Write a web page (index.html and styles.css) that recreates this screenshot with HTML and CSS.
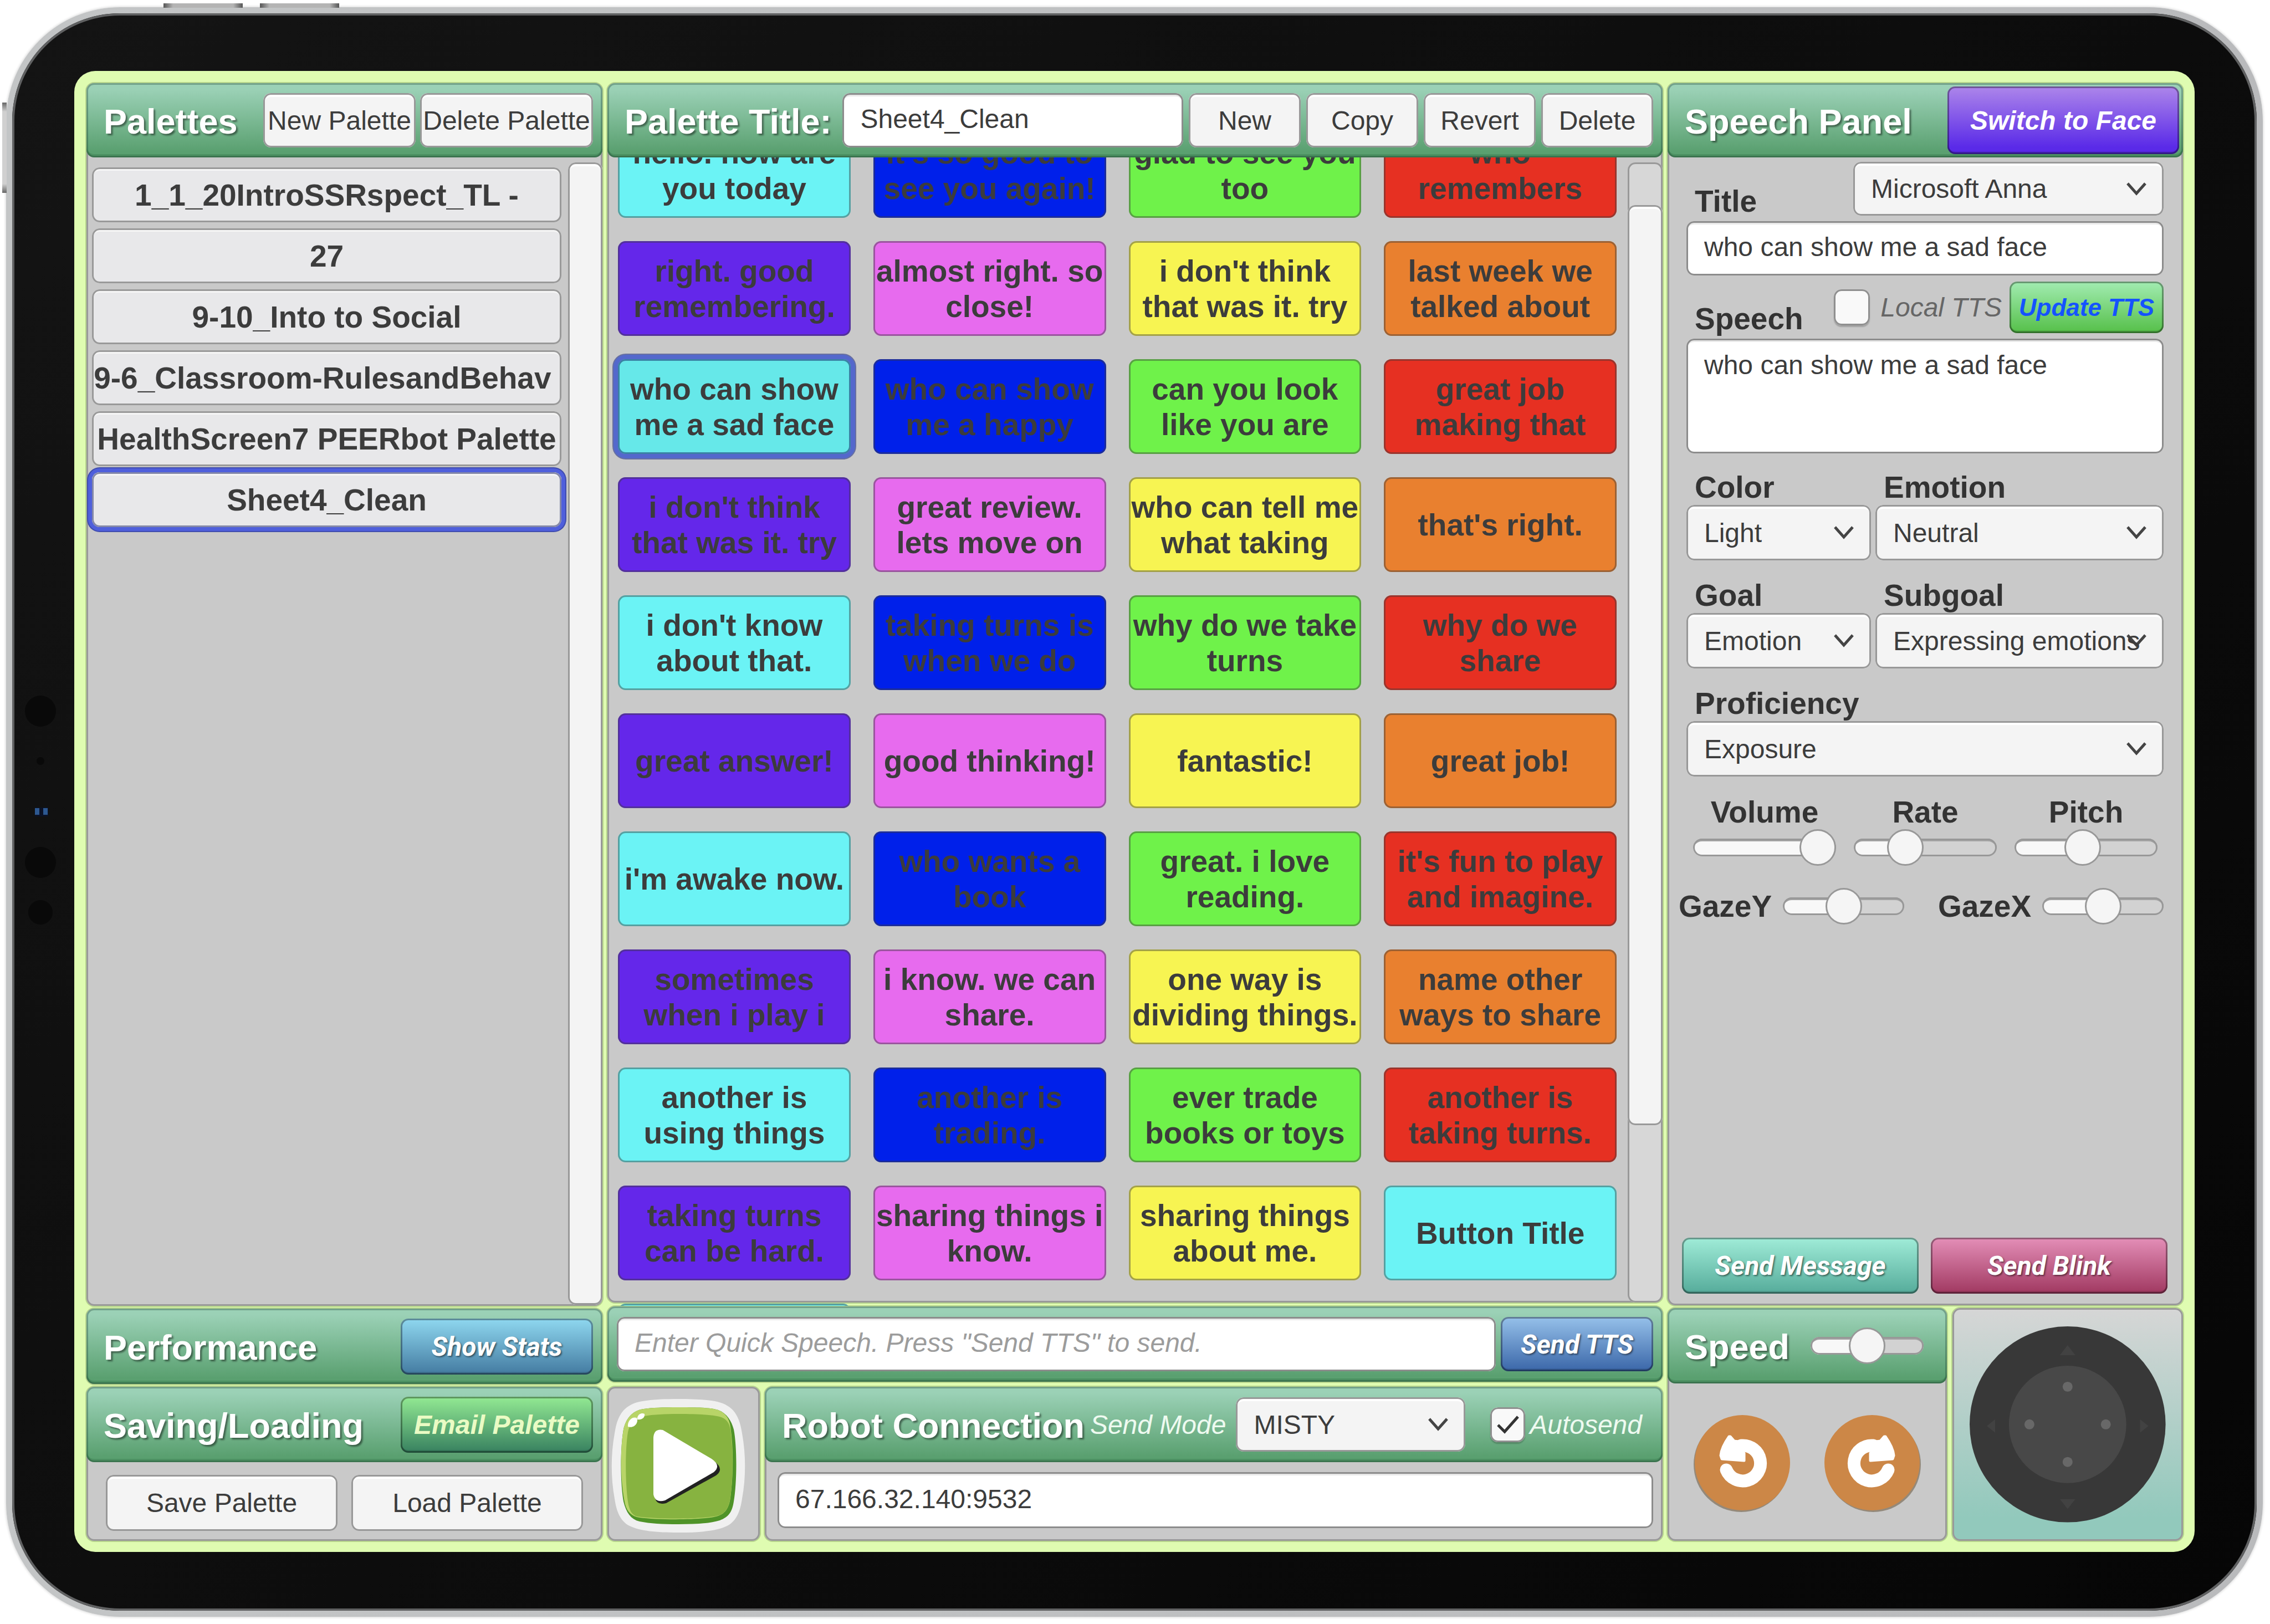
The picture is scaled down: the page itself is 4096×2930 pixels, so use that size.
FILE: index.html
```html
<!DOCTYPE html>
<html lang="en">
<head>
<meta charset="utf-8">
<title>PEERbot Controller</title>
<link rel="stylesheet" href="styles.css">
</head>
<body>
<div class="tablet">
  <span class="key key-top key-power"></span>
  <span class="key key-top key-volume"></span>
  <span class="key key-side"></span>
  <div class="bezel">
    <svg class="sensors" viewBox="0 0 64 420" aria-hidden="true">
      <g fill="#090909"><circle cx="32" cy="32" r="28"/><circle cx="32" cy="122" r="7"/><circle cx="32" cy="305" r="28"/><circle cx="32" cy="395" r="22"/></g>
      <rect x="22" y="206" width="24" height="16" fill="#0b1226"/>
      <rect x="22" y="207" width="8" height="12" fill="#2d5890"/><rect x="37" y="207" width="8" height="12" fill="#2d5890"/>
    </svg>
    <main class="screen">

      <div class="column column-left">
        <section class="panel grow">
          <header class="bar">
            <h2>Palettes</h2>
            <div class="bar-end gap-small">
              <button class="btn w-new">New Palette</button>
              <button class="btn w-del">Delete Palette</button>
            </div>
          </header>
          <div class="palette-body">
            <div class="palette-list">
              <button class="palette">1_1_20IntroSSRspect_TL -</button>
              <button class="palette">27</button>
              <button class="palette">9-10_Into to Social</button>
              <button class="palette">9-6_Classroom-RulesandBehav&nbsp;</button>
              <button class="palette">HealthScreen7 PEERbot Palette</button>
              <button class="palette selected">Sheet4_Clean</button>
            </div>
            <div class="scrollbar"><div class="thumb thumb-full"></div></div>
          </div>
        </section>
        <section class="panel">
          <header class="bar bar-low">
            <h2>Performance</h2>
            <div class="bar-end"><button class="btn tall color stats">Show Stats</button></div>
          </header>
        </section>
        <section class="panel">
          <header class="bar bar-low">
            <h2>Saving/Loading</h2>
            <div class="bar-end"><button class="btn tall color email">Email Palette</button></div>
          </header>
          <div class="saving-body">
            <button class="btn tall">Save Palette</button>
            <button class="btn tall">Load Palette</button>
          </div>
        </section>
      </div>

      <div class="column column-middle">
        <section class="panel grow">
          <header class="bar bar-title">
            <h2><label for="palette-title">Palette Title:</label></h2>
            <input class="field" id="palette-title" type="text" value="Sheet4_Clean">
            <button class="btn w-tool">New</button>
            <button class="btn w-tool">Copy</button>
            <button class="btn w-tool">Revert</button>
            <button class="btn w-tool">Delete</button>
          </header>
          <div class="board">
            <div class="board-view">
              <div class="speech-grid">
                <button class="say cyan">hello. how are<br>you today</button>
                <button class="say blue">it's so good to<br>see you again!</button>
                <button class="say green">glad to see you<br>too</button>
                <button class="say red">who<br>remembers</button>

                <button class="say purple">right. good<br>remembering.</button>
                <button class="say pink">almost right. so<br>close!</button>
                <button class="say yellow">i don't think<br>that was it. try</button>
                <button class="say orange">last week we<br>talked about</button>

                <button class="say cyan selected">who can show<br>me a sad face</button>
                <button class="say blue">who can show<br>me a happy</button>
                <button class="say green">can you look<br>like you are</button>
                <button class="say red">great job<br>making that</button>

                <button class="say purple">i don't think<br>that was it. try</button>
                <button class="say pink">great review.<br>lets move on</button>
                <button class="say yellow">who can tell me<br>what taking</button>
                <button class="say orange">that's right.</button>

                <button class="say cyan">i don't know<br>about that.</button>
                <button class="say blue">taking turns is<br>when we do</button>
                <button class="say green">why do we take<br>turns</button>
                <button class="say red">why do we<br>share</button>

                <button class="say purple">great answer!</button>
                <button class="say pink">good thinking!</button>
                <button class="say yellow">fantastic!</button>
                <button class="say orange">great job!</button>

                <button class="say cyan">i'm awake now.</button>
                <button class="say blue">who wants a<br>book</button>
                <button class="say green">great. i love<br>reading.</button>
                <button class="say red">it's fun to play<br>and imagine.</button>

                <button class="say purple">sometimes<br>when i play i</button>
                <button class="say pink">i know. we can<br>share.</button>
                <button class="say yellow">one way is<br>dividing things.</button>
                <button class="say orange">name other<br>ways to share</button>

                <button class="say cyan">another is<br>using things</button>
                <button class="say blue">another is<br>trading.</button>
                <button class="say green">ever trade<br>books or toys</button>
                <button class="say red">another is<br>taking turns.</button>

                <button class="say purple">taking turns<br>can be hard.</button>
                <button class="say pink">sharing things i<br>know.</button>
                <button class="say yellow">sharing things<br>about me.</button>
                <button class="say cyan">Button Title</button>

                <button class="say cyan" aria-label="Empty"></button>
              </div>
            </div>
            <div class="scrollbar scrollbar-board"><div class="thumb"></div></div>
          </div>
        </section>
        <section class="panel">
          <div class="bar bar-low bar-quick">
            <input class="field" type="text" aria-label="Quick speech" placeholder='Enter Quick Speech. Press "Send TTS" to send.'>
            <button class="btn color tts">Send TTS</button>
          </div>
        </section>
        <div class="robot-row">
          <section class="panel play-panel">
            <button class="play" aria-label="Play">
              <svg viewBox="0 0 240 241">
                <path d="M120 0C165 0 195 3 208 12 226 22 232 42 235 62 242 100 242 142 235 180 232 200 226 220 208 229 190 238 160 241 120 241S50 238 32 229C14 220 8 200 5 180-2 142-2 100 5 62 8 42 14 22 32 12 45 3 75 0 120 0Z" fill="#f0f0f0"/>
                <path d="M120 15C160 15 180 16 192 20 208 26 216 40 220 55 226 85 226 150 220 185 217 205 210 213 195 219 175 225 150 226 120 226S70 225 50 221C34 217 26 205 21 185 15 150 15 90 21 55 25 38 34 24 52 19 66 16 90 15 120 15Z" fill="#4f9328"/>
                <path d="M120 15C160 15 180 16 192 20 204 25 212 34 214 50 220 90 219 140 214 178 211 200 202 210 184 213 150 219 80 218 50 214 36 212 28 204 24 190 15 150 15 90 21 55 25 38 34 24 52 19 66 16 90 15 120 15Z" fill="#b8d468"/>
                <path d="M120 27C160 27 190 29 200 34 208 38 212 44 214 55 219 90 219 140 214 176 211 200 202 210 184 212 150 217 80 217 46 212 36 210 31 200 29 185 24 150 24 90 29 60 32 44 42 34 58 31 75 28 95 27 120 27Z" fill="#87b340"/>
                <path d="M29 50C28 40 36 31 45 34 49 42 41 54 29 50ZM46 34C48 26 55 25 59 27 60 34 54 38 46 37Z" fill="#fff"/>
                <path d="M76 76 Q76 60 92 62 L184 112 Q204 126 188 138 L98 188 Q80 192 78 178Z" fill="#222"/>
                <path d="M75 70 Q76 53 92 56 L180 108 Q198 120 184 132 L96 183 Q78 188 75 172Z" fill="#fff"/>
              </svg>
            </button>
          </section>
          <section class="panel robot-panel">
            <header class="bar bar-low bar-robot">
              <h2>Robot Connection</h2>
              <label class="hint" for="send-mode">Send Mode</label>
              <select class="select mode" id="send-mode"><option>MISTY</option></select>
              <input class="tick tick-small" type="checkbox" id="autosend" checked>
              <label class="hint" for="autosend">Autosend</label>
            </header>
            <div class="robot-body">
              <input class="field" type="text" aria-label="Robot address" value="67.166.32.140:9532">
            </div>
          </section>
        </div>
      </div>

      <div class="column column-right">
        <section class="panel grow">
          <header class="bar bar-speech">
            <h2>Speech Panel</h2>
            <div class="bar-end"><button class="btn color face">Switch to Face</button></div>
          </header>
          <div class="speech-form">
            <div class="line">
              <label class="name name-tight" for="title">Title</label>
              <select class="select voice" aria-label="Voice"><option>Microsoft Anna</option></select>
            </div>
            <input class="field" id="title" type="text" value="who can show me a sad face">
            <div class="line line-speech">
              <label class="name name-tight" for="speech">Speech</label>
              <div class="local">
                <input class="tick" type="checkbox" id="local-tts">
                <label class="hint hint-dark" for="local-tts">Local TTS</label>
              </div>
              <button class="btn color update">Update TTS</button>
            </div>
            <textarea class="field area" id="speech">who can show me a sad face</textarea>
            <div class="choices">
              <div class="choice"><label class="name" for="color">Color</label><select class="select" id="color"><option>Light</option></select></div>
              <div class="choice"><label class="name" for="emotion">Emotion</label><select class="select" id="emotion"><option>Neutral</option></select></div>
              <div class="choice"><label class="name" for="goal">Goal</label><select class="select" id="goal"><option>Emotion</option></select></div>
              <div class="choice"><label class="name" for="subgoal">Subgoal</label><select class="select" id="subgoal"><option>Expressing emotions</option></select></div>
              <div class="choice wide"><label class="name" for="proficiency">Proficiency</label><select class="select" id="proficiency"><option>Exposure</option></select></div>
            </div>
          </div>
          <div class="voice-sliders">
            <div class="dial"><label for="volume">Volume</label><input class="range" id="volume" type="range" value="100" style="--v:100%"></div>
            <div class="dial"><label for="rate">Rate</label><input class="range" id="rate" type="range" value="31" style="--v:31%"></div>
            <div class="dial"><label for="pitch">Pitch</label><input class="range" id="pitch" type="range" value="47" style="--v:47%"></div>
          </div>
          <div class="gaze-sliders">
            <div class="gaze"><label for="gaze-y">GazeY</label><input class="range" id="gaze-y" type="range" value="50" style="--v:50%"></div>
            <div class="gaze"><label for="gaze-x">GazeX</label><input class="range" id="gaze-x" type="range" value="50" style="--v:50%"></div>
          </div>
          <div class="send-row">
            <button class="btn tall color message">Send Message</button>
            <button class="btn tall color blink">Send Blink</button>
          </div>
        </section>
        <div class="drive-row">
          <section class="panel turn-panel">
            <header class="bar bar-low bar-speed">
              <h2><label for="speed">Speed</label></h2>
              <input class="range" id="speed" type="range" value="50" style="--v:50%">
            </header>
            <div class="turn-body">
              <button class="turn" aria-label="Turn left">
                <svg viewBox="0 0 175 176">
                  <circle cx="86" cy="90" r="86" fill="#94897a"/><circle cx="88" cy="87" r="86" fill="#cc8747"/>
                  <path d="M59 100A32 32 0 1 0 86 56" fill="none" stroke="#fff" stroke-width="23" stroke-linecap="round"/>
                  <path d="M66 40L73 48 90 50 89 68 91 70V83L51 80 49 74C50 62 57 50 64 40Z" fill="#fff" stroke="#fff" stroke-width="5" stroke-linejoin="round"/>
                </svg>
              </button>
              <button class="turn" aria-label="Turn right">
                <svg viewBox="0 0 175 176">
                  <g transform="matrix(-1 0 0 1 175 0)">
                  <circle cx="86" cy="90" r="86" fill="#94897a"/><circle cx="88" cy="87" r="86" fill="#cc8747"/>
                  <path d="M59 100A32 32 0 1 0 86 56" fill="none" stroke="#fff" stroke-width="23" stroke-linecap="round"/>
                  <path d="M66 40L73 48 90 50 89 68 91 70V83L51 80 49 74C50 62 57 50 64 40Z" fill="#fff" stroke="#fff" stroke-width="5" stroke-linejoin="round"/>
                  </g>
                </svg>
              </button>
            </div>
          </section>
          <section class="panel stick-panel">
            <svg class="stick" viewBox="0 0 354 354" role="img" aria-label="Joystick">
              <circle cx="177" cy="177" r="177" fill="#383838"/>
              <circle cx="177" cy="177" r="106" fill="#484848"/>
              <g fill="#686868"><circle cx="177" cy="109" r="9"/><circle cx="177" cy="245" r="9"/><circle cx="108" cy="177" r="9"/><circle cx="246" cy="177" r="9"/></g>
              <g fill="#424242"><path d="M177 34 191 52H163Z"/><path d="M177 330 191 312H163Z"/><path d="M31 180 46 168V192Z"/><path d="M323 180 308 168V192Z"/></g>
            </svg>
          </section>
        </div>
      </div>

    </main>
  </div>
</div>
</body>
</html>
```
FILE: styles.css
```css
* { box-sizing: border-box; }

html, body { height: 100%; }

body {
  margin: 0;
  padding: 13px 13px 13px 11px;
  background: #fff;
  font-family: "Liberation Sans", Arial, sans-serif;
  font-size: 48px;
  color: #3c3c3c;
}

h2 { margin: 0; }

button, input, select, textarea {
  margin: 0;
  border: 0;
  padding: 0;
  font: inherit;
  color: inherit;
  appearance: none;
  outline: 0;
}

/* Tablet frame */

.tablet {
  position: relative;
  height: 100%;
  padding: 11px;
  border-radius: 205px;
  background: linear-gradient(90deg, #c3c5c6, #b9babc);
  box-shadow: 0 0 4px 1px #d8d8d8;
}

.bezel {
  position: relative;
  height: 100%;
  padding: 104px 112px 106px;
  border-radius: 194px;
  background: linear-gradient(135deg, #141414, #060606);
  box-shadow: inset 0 0 0 4px #606162;
}

.key {
  position: absolute;
  background: linear-gradient(90deg, #555, #b4b4b4 12%, #b4b4b4 88%, #555);
}
.key-top { top: -7px; width: 143px; height: 8px; }
.key-power { left: 284px; }
.key-volume { left: 458px; }
.key-side {
  top: 172px;
  left: -7px;
  width: 8px;
  height: 163px;
  background: linear-gradient(#666, #d0d0d0 10%, #d0d0d0 90%, #666);
}

.sensors {
  position: absolute;
  left: 19px;
  top: 50%;
  width: 64px;
  margin-top: -214px;
}

.screen {
  display: grid;
  grid-template-columns: 931fr 1904fr 930fr;
  gap: 9px;
  height: 100%;
  padding: 22px 21px 20px 22px;
  border-radius: 38px;
  background: #dffcb1;
}

.column { display: flex; flex-direction: column; min-width: 0; min-height: 0; }
.column-left, .column-right { gap: 5px; }

/* Panels and their title bars */

.panel {
  display: flex;
  flex-direction: column;
  min-width: 0;
  border-radius: 14px;
  background: #c9c9c9;
  box-shadow: inset 0 0 0 3px #999, 0 0 0 2px rgba(60, 90, 30, .25);
}
.grow { flex: 1; min-height: 0; }

.bar {
  display: flex;
  align-items: center;
  flex: none;
  height: 134px;
  padding: 0 17px 0 31px;
  border-radius: 14px;
  background: linear-gradient(#9bd1b6 8%, #5aa070 92%);
  box-shadow: inset 0 0 0 3px rgba(20, 50, 35, .3), inset 0 -6px 0 rgba(0, 60, 20, .15);
}
.bar-low { height: 136px; }

.bar h2 {
  padding-top: 4px;
  font-size: 63px;
  line-height: 72px;
  color: #fff;
  text-shadow: 3px 3px 3px rgba(0, 0, 0, .45);
  white-space: nowrap;
}
.bar-end { display: flex; margin-left: auto; }
.gap-small { gap: 8px; }
.bar-title { gap: 10px; }
.bar-title .field { flex: 1; margin-left: 10px; }
.bar-quick { gap: 9px; padding-left: 17px; }
.bar-quick .field { flex: 1; }
.bar-speech { padding-right: 7px; }

/* Buttons */

.btn {
  flex: none;
  height: 98px;
  border-radius: 14px;
  background: #f4f4f4;
  box-shadow: inset 0 0 0 3px #989898, inset 0 7px 0 #fff;
  white-space: nowrap;
}
.tall { height: 101px; }
.w-new { width: 275px; }
.w-del { width: 312px; }
.w-tool { width: 202px; }

.color {
  font-weight: bold;
  font-style: italic;
  color: #fff;
  box-shadow: inset 0 0 0 3px rgba(0, 0, 0, .35), inset 0 -5px 0 rgba(0, 0, 0, .1);
}
.stats, .tts, .message, .blink {
  font-family: Roboto, sans-serif;
  text-shadow: 2px 2px 3px rgba(0, 0, 0, .5);
}
.stats { width: 347px; background: linear-gradient(#8fd8f0, #437aa0); }
.email { width: 347px; background: linear-gradient(#93ea93, #37805f); color: #eafbc4; }
.tts { width: 275px; background: linear-gradient(#96c1ea, #3a66a8); }
.face { width: 418px; height: 122px; background: linear-gradient(#ad86ea, #5a2ae8 90%); }
.update {
  width: 278px;
  height: 93px;
  background: linear-gradient(#a2ecb2, #55bf48);
  font-size: 44px;
  color: #1553ff;
}
.message { background: linear-gradient(#a0ecd8, #55ab9a); }
.blink { background: linear-gradient(#e48fb8, #a03860); }

/* Fields */

.field {
  display: block;
  min-width: 0;
  width: 100%;
  height: 98px;
  padding: 0 32px 5px;
  border-radius: 14px;
  background: #fff;
  box-shadow: inset 0 0 0 3px #8c8c8c, inset 0 6px 0 #e8e8e8;
}
.field::placeholder { color: #9c9c9c; font-style: italic; opacity: 1; }
.area { height: 207px; padding: 20px 32px; line-height: 56px; resize: none; overflow: hidden; }

.select {
  width: 100%;
  height: 100px;
  padding-left: 32px;
  border-radius: 14px;
  background: #f4f4f4 url("data:image/svg+xml,%3Csvg xmlns='http://www.w3.org/2000/svg' viewBox='0 0 36 24'%3E%3Cpath d='M2 2 18 20 34 2' fill='none' stroke='%23444' stroke-width='5'/%3E%3C/svg%3E") no-repeat right 31px center / 36px 24px;
  box-shadow: inset 0 0 0 3px #989898, inset 0 7px 0 #fff;
}

.tick {
  flex: none;
  width: 65px;
  height: 65px;
  border-radius: 14px;
  background: #f9f9f9;
  box-shadow: inset 0 0 0 3px #8f8f8f, 0 3px 2px rgba(0, 0, 0, .2);
}
.tick:checked {
  background: #f9f9f9 url("data:image/svg+xml,%3Csvg xmlns='http://www.w3.org/2000/svg' viewBox='0 0 40 34'%3E%3Cpath d='M2 18 14 30 38 3' fill='none' stroke='%23333' stroke-width='5'/%3E%3C/svg%3E") no-repeat center / 40px 34px;
}

.hint { font-style: italic; color: #eefaf0; white-space: nowrap; }
.hint-dark { color: #666; }

.range {
  display: block;
  width: 100%;
  height: 66px;
  background: none;
}
.range::-webkit-slider-runnable-track {
  height: 32px;
  border-radius: 16px;
  background: linear-gradient(90deg, #f8f8f8 var(--v), #d2d2d2 var(--v));
  box-shadow: inset 0 0 0 3px #989898, inset 0 5px 0 #a4a4a4;
}
.range::-webkit-slider-thumb {
  appearance: none;
  width: 66px;
  height: 66px;
  margin-top: -17px;
  border: 3px solid #989898;
  border-radius: 50%;
  background: #f5f5f5;
}

/* Palette list */

.palette-body { display: flex; flex: 1; min-height: 0; }
.palette-list {
  display: flex;
  flex-direction: column;
  flex: 1;
  gap: 11px;
  min-width: 0;
  padding: 18px 12px 0 10px;
}
.palette {
  height: 99px;
  border-radius: 14px;
  background: #e8e8ea;
  box-shadow: inset 0 0 0 3px #999, inset 0 6px 0 #f6f6f6;
  font-size: 55px;
  font-weight: bold;
  white-space: nowrap;
}
.palette.selected {
  box-shadow: inset 0 0 0 3px #8488a8, inset 0 6px 0 #f6f6f6, 0 0 0 7px #4f5fdb, 0 0 0 9px #3f4cae;
}

.scrollbar {
  flex: none;
  width: 62px;
  margin: 9px 0 2px;
  border-radius: 14px;
  background: #d7d7d7;
  box-shadow: inset 0 0 0 3px #999;
}
.thumb {
  height: 100%;
  border-radius: 14px;
  background: #f4f4f4;
  box-shadow: inset 0 0 0 3px #999, inset 0 7px 0 #fff;
}

/* Board of speech buttons */

.column-middle .grow { margin-bottom: 7px; }
.board { display: flex; flex: 1; min-height: 0; }
.board-view {
  position: relative;
  flex: 1;
  min-width: 0;
  margin-bottom: -6px;
  padding: 0 20px 0 19px;
  overflow: hidden;
}
.speech-grid {
  display: grid;
  grid-template-columns: repeat(4, minmax(0, 1fr));
  grid-auto-rows: 171px;
  gap: 42px 41px;
  margin-top: -62px;
}
.say {
  border-radius: 14px;
  box-shadow: inset 0 0 0 3px rgba(60, 60, 60, .45);
  font-size: 55px;
  font-weight: bold;
  line-height: 64px;
  white-space: nowrap;
}
.say.selected {
  box-shadow: inset 0 0 0 3px rgba(30, 60, 120, .6), 0 0 0 8px #5468cc, 0 0 0 10px #6870a0;
}
.cyan { background: #6bf3f5; }
.cyan.selected { background: #66e8e9; }
.blue { background: #0020ea; }
.green { background: #6ff24a; }
.red { background: #e63022; }
.purple { background: #6427ea; }
.pink { background: #e76bee; }
.yellow { background: #f7f452; }
.orange { background: #e9802f; }

.scrollbar-board { width: 63px; margin-bottom: 0; padding: 77px 0 320px; }

/* Bottom rows */

.saving-body {
  display: grid;
  grid-template-columns: 1fr 1fr;
  gap: 25px;
  padding: 23px 35px 18px;
}

.robot-row { display: flex; gap: 9px; margin-top: 9px; }
.play-panel { flex: 0 0 275px; padding: 22px 8px 0; }
.play { width: 240px; height: 241px; background: none; }
.play svg, .turn svg { display: block; width: 100%; height: 100%; overflow: visible; }
.robot-panel { flex: 1; }
.bar-robot .hint { margin-left: 10px; }
.mode { flex: 1; width: auto; min-width: 0; height: 98px; margin: 0 45px 0 18px; }
.tick-small { width: 63px; height: 63px; }
.bar-robot .tick + .hint { margin: 0 20px 0 8px; }
.robot-body { padding: 18px 17px 23px 23px; }
.robot-body .field { height: 101px; }

/* Speech form */

.speech-form { display: flex; flex-direction: column; padding: 8px 35px 0 34px; }
.name {
  display: block;
  padding-left: 15px;
  font-size: 55px;
  font-weight: bold;
  line-height: 64px;
  color: #333;
}
.name-tight { line-height: 52px; }
.line { display: flex; align-items: flex-end; justify-content: space-between; margin-bottom: 10px; }
.voice { width: 560px; height: 97px; }
.line-speech { margin-top: 11px; }
.local { display: flex; align-items: center; gap: 19px; height: 93px; margin: 0 14px 0 auto; }
.choices {
  display: grid;
  grid-template-columns: 333fr 520fr;
  gap: 31px 8px;
  margin-top: 29px;
}
.choice { min-width: 0; }
.choice .select { display: block; }
.wide { grid-column: span 2; }

.voice-sliders {
  display: grid;
  grid-template-columns: repeat(3, 1fr);
  gap: 32px;
  padding: 34px 46px 0;
}
.dial, .gaze { font-size: 55px; font-weight: bold; line-height: 61px; color: #333; }
.dial label { display: block; text-align: center; }
.gaze-sliders {
  display: grid;
  grid-template-columns: 1fr 1fr;
  gap: 61px;
  padding: 40px 35px 0 20px;
}
.gaze { display: flex; align-items: center; gap: 20px; }
.gaze .range { flex: 1; min-width: 0; }

.send-row {
  display: grid;
  grid-template-columns: 1fr 1fr;
  gap: 22px;
  margin-top: auto;
  padding: 0 28px 21px 26px;
}

/* Drive controls */

.drive-row { display: flex; gap: 10px; }
.turn-panel { flex: 504; }
.bar-speed { padding-right: 42px; }
.bar-speed .range { width: 204px; margin-left: auto; }
.turn-body { display: flex; justify-content: center; gap: 60px; padding: 56px 0 52px; }
.turn { width: 175px; height: 176px; background: none; }
.stick-panel {
  flex: 416;
  align-items: center;
  justify-content: center;
  background: linear-gradient(#d6d6d6, #92c9bc 90%);
}
.stick { width: 85%; }
```
